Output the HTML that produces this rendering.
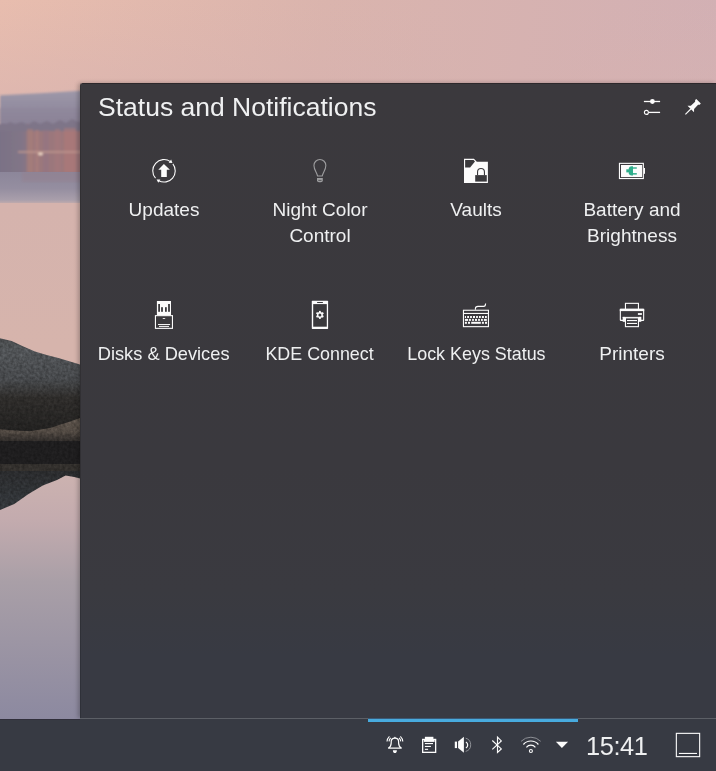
<!DOCTYPE html>
<html><head><meta charset="utf-8">
<style>
html,body{margin:0;padding:0;width:716px;height:771px;overflow:hidden;background:#373a43;}
body{position:relative;font-family:"Liberation Sans",sans-serif;}
#wall{position:absolute;left:0;top:0;width:716px;height:719px;}
#panel{position:absolute;left:80px;top:83px;width:636px;height:635px;background:linear-gradient(180deg,#3b393d 0%,#3a393e 60%,#3a3a40 80%,#383a43 90%,#383a43 100%);border-top-left-radius:3px;box-shadow:-2px 0 4px rgba(0,0,0,0.25);}
#panel:before{content:"";position:absolute;left:0;top:0;bottom:0;width:1px;background:rgba(0,0,0,0.15);}
#panel:after{content:"";position:absolute;left:2px;top:0;right:0;height:1px;background:rgba(20,10,12,0.35);}
.t{position:absolute;color:#eff0f1;white-space:nowrap;line-height:1;}
#title{left:98px;top:94px;font-size:26.5px;}
.lbl{position:absolute;color:#eff0f1;font-size:19px;white-space:nowrap;text-align:center;width:156px;line-height:26px;}
.sq{display:inline-block;transform-origin:50% 50%;}
#taskbar{position:absolute;left:0;top:719px;width:716px;height:52px;background:#373a43;}
#tline{position:absolute;left:80px;top:718px;width:636px;height:1px;background:#5c5f66;}
#tline2{position:absolute;left:0;top:719px;width:80px;height:1px;background:#302f3b;}
#bluebar{position:absolute;left:368px;top:718px;width:210px;height:4px;background:linear-gradient(180deg,#3a5a78 0,#3a5a78 1px,#4aaadc 1px,#46abe0 4px);}
svg.i{position:absolute;overflow:visible;}
</style></head><body>
<svg id="wall" width="716" height="719" viewBox="0 0 716 719" style="position:absolute">
  <defs>
    <linearGradient id="sky" gradientUnits="userSpaceOnUse" x1="0" y1="0" x2="716" y2="90">
      <stop offset="0" stop-color="#e8bdae"/>
      <stop offset="0.45" stop-color="#dab4ad"/>
      <stop offset="1" stop-color="#d2b0b4"/>
    </linearGradient>
    <linearGradient id="skyv" gradientUnits="userSpaceOnUse" x1="0" y1="0" x2="0" y2="95">
      <stop offset="0" stop-color="#d6b2b0" stop-opacity="0"/>
      <stop offset="1" stop-color="#d6b2b0" stop-opacity="0.5"/>
    </linearGradient>
    <linearGradient id="hill" gradientUnits="userSpaceOnUse" x1="0" y1="90" x2="0" y2="128">
      <stop offset="0" stop-color="#9e98a9"/>
      <stop offset="0.35" stop-color="#958fa2"/>
      <stop offset="1" stop-color="#877f93"/>
    </linearGradient>
    <linearGradient id="refl" gradientUnits="userSpaceOnUse" x1="0" y1="172" x2="0" y2="205">
      <stop offset="0" stop-color="#8c869a"/>
      <stop offset="0.5" stop-color="#958ea0"/>
      <stop offset="0.85" stop-color="#a99fab"/>
      <stop offset="1" stop-color="#cfb1ad"/>
    </linearGradient>
    <linearGradient id="water1" gradientUnits="userSpaceOnUse" x1="0" y1="203" x2="0" y2="345">
      <stop offset="0" stop-color="#d5b3ad"/>
      <stop offset="1" stop-color="#d6b4ac"/>
    </linearGradient>
    <linearGradient id="water2" gradientUnits="userSpaceOnUse" x1="0" y1="470" x2="0" y2="719">
      <stop offset="0" stop-color="#cdb3b0"/>
      <stop offset="0.2" stop-color="#c3abae"/>
      <stop offset="0.45" stop-color="#a99fa7"/>
      <stop offset="1" stop-color="#8c89a0"/>
    </linearGradient>
    <linearGradient id="rockTop" gradientUnits="userSpaceOnUse" x1="0" y1="338" x2="0" y2="430">
      <stop offset="0" stop-color="#4a4c4e"/>
      <stop offset="0.15" stop-color="#505356"/>
      <stop offset="0.45" stop-color="#46484b"/>
      <stop offset="0.65" stop-color="#2e2c2a"/>
      <stop offset="1" stop-color="#222120"/>
    </linearGradient>
    <linearGradient id="rockRefl" gradientUnits="userSpaceOnUse" x1="0" y1="471" x2="0" y2="510">
      <stop offset="0" stop-color="#2a2b2d"/>
      <stop offset="1" stop-color="#33373b"/>
    </linearGradient>
    <linearGradient id="ledge" gradientUnits="userSpaceOnUse" x1="0" y1="418" x2="0" y2="442">
      <stop offset="0" stop-color="#5c534b"/>
      <stop offset="0.55" stop-color="#524a43"/>
      <stop offset="1" stop-color="#2c2927"/>
    </linearGradient>
    <linearGradient id="forest" gradientUnits="userSpaceOnUse" x1="0" y1="0" x2="80" y2="0">
      <stop offset="0" stop-color="#7a7286"/>
      <stop offset="0.28" stop-color="#827587"/>
      <stop offset="0.42" stop-color="#9a787c"/>
      <stop offset="1" stop-color="#9e777a"/>
    </linearGradient>
    <filter id="blur1" x="-10%" y="-10%" width="120%" height="120%"><feGaussianBlur stdDeviation="1.3"/></filter>
    <filter id="blur05" x="-10%" y="-10%" width="120%" height="120%"><feGaussianBlur stdDeviation="1"/></filter>
  <filter id="noise" x="0" y="0" width="100%" height="100%" color-interpolation-filters="sRGB">
      <feTurbulence type="fractalNoise" baseFrequency="0.35" numOctaves="2" seed="3"/>
      <feColorMatrix type="matrix" values="1.4 0 0 0 -0.2  1.4 0 0 0 -0.2  1.4 0 0 0 -0.2  0 0 0 0 1"/>
    </filter>
    <clipPath id="rockclip"><path d="M0 338.2 L11.7 341.1 L23.4 346.4 L35 351.6 L46.7 355.1 L58.4 358 L70.1 361.5 L80 364.5 L80 478.5 L74.2 477 L65.6 475.6 L57 480 L42.8 485.6 L28.5 494 L14.3 504 L0 509.9 Z"/></clipPath>
  </defs>
  <rect x="0" y="0" width="716" height="719" fill="url(#sky)"/>
  <rect x="0" y="0" width="716" height="95" fill="url(#skyv)"/>
  <g filter="url(#blur05)"><path d="M0 95.2 L20 94.3 L40 93.3 L60 92 L80 90.8 L716 90.8 L716 130 L0 130 Z" fill="url(#hill)"/>
  <rect x="-5" y="108" width="90" height="15" fill="#8d8698" opacity="0.45"/></g>
  <g filter="url(#blur1)">
  <rect x="-5" y="124" width="90" height="51" fill="url(#forest)"/>
  <path d="M-5 131 L-5 124 L5 125 L10 122 L15 124 L22 122 L28 125 L34 121 L40 124 L47 121 L53 124 L60 120 L66 123 L72 119 L78 122 L85 121 L85 131 Z" fill="#7e7588"/>
  <rect x="27" y="129" width="6" height="45" fill="#b08076" opacity="0.55"/>
  <rect x="35" y="130" width="4" height="44" fill="#a97c7c" opacity="0.7"/>
  <rect x="43" y="130" width="6" height="44" fill="#927483" opacity="0.6"/>
  <rect x="55" y="129" width="5" height="45" fill="#a67a7c" opacity="0.6"/>
  <rect x="64" y="128" width="12" height="46" fill="#b07a78" opacity="0.55"/>
  <rect x="18" y="151" width="66" height="2" fill="#c29a90" opacity="0.7"/>
  <ellipse cx="40.5" cy="154" rx="2.5" ry="1.4" fill="#ead2c2"/>
  </g>
  <rect x="0" y="172" width="80" height="33" fill="url(#refl)"/>
  <rect x="22" y="172" width="62" height="10" fill="#977d89" opacity="0.35" filter="url(#blur1)"/>
  <rect x="0" y="203" width="80" height="170" fill="url(#water1)"/>
  <rect x="0" y="440" width="80" height="279" fill="url(#water2)"/>
  <path d="M0 338.2 L11.7 341.1 L23.4 346.4 L35 351.6 L46.7 355.1 L58.4 358 L70.1 361.5 L80 364.5 L80 442 L0 442 Z" fill="url(#rockTop)"/>
  <path d="M0 429.3 L15 430.5 L30 431.2 L50 428 L70 421.5 L80 418 L80 442 L0 442 Z" fill="url(#ledge)"/>
  <rect x="0" y="441" width="80" height="23" fill="#1e1d1e"/>
  <rect x="0" y="464" width="80" height="7" fill="#322f2c"/>
  <path d="M0 471 L80 471 L80 478.5 L74.2 477 L65.6 475.6 L57 480 L42.8 485.6 L28.5 494 L14.3 504 L0 509.9 Z" fill="url(#rockRefl)"/>
  <rect x="0" y="336" width="80" height="176" filter="url(#noise)" clip-path="url(#rockclip)" opacity="0.22" style="mix-blend-mode:overlay"/>
</svg>

<div id="panel"></div>
<div class="t" id="title">Status and Notifications</div>

<!-- header icons -->
<svg class="i" style="left:640px;top:95px" width="24" height="24" viewBox="0 0 24 24">
  <g stroke="#fcfcfc" stroke-width="1.3" fill="none">
    <line x1="3.9" y1="6.5" x2="20.1" y2="6.5"/>
    <line x1="8.9" y1="17.4" x2="20.1" y2="17.4"/>
    <circle cx="6.4" cy="17.4" r="2.0" stroke-width="1.1"/>
  </g>
  <circle cx="12.4" cy="6.5" r="2.4" fill="#fcfcfc"/>
</svg>
<svg class="i" style="left:681px;top:95px" width="24" height="24" viewBox="0 0 24 24">
  <g transform="translate(4.4 19.4) rotate(45)">
    <line x1="0" y1="0" x2="0" y2="-8" stroke="#fcfcfc" stroke-width="1.1"/>
    <path d="M-4.6 -7.6 L4.6 -7.6 L2.3 -10 L2.1 -15.8 L3.2 -17 L3.2 -18.6 L-3.2 -18.6 L-3.2 -17 L-2.1 -15.8 L-2.3 -10 Z" fill="#fcfcfc"/>
  </g>
</svg>

<!-- row 1 icons -->
<svg class="i" style="left:148px;top:155px" width="32" height="32" viewBox="0 0 32 32">
  <g fill="none" stroke="#fcfcfc" stroke-width="1.1">
    <path d="M24.87 8.87 A11.25 11.25 0 0 1 10.72 25.73"/>
    <path d="M7.51 23.18 A11.25 11.25 0 0 1 22.45 6.58"/>
  </g>
  <g fill="#fcfcfc">
    <path d="M8.56 24.45 L10.27 27.82 L12.33 24.39Z"/>
    <path d="M24.44 8.12 L23.15 4.57 L20.69 7.72Z"/>
    <path d="M15.9 8.9 L21.9 14.75 L18.8 14.75 L18.8 21.9 L13.2 21.9 L13.2 14.75 L10.3 14.75 Z"/>
  </g>
</svg>
<svg class="i" style="left:304px;top:155px" width="32" height="32" viewBox="0 0 32 32">
  <path d="M13.6 21 C12.8 17.6 9.95 14.6 9.95 10.45 A5.95 5.95 0 0 1 21.85 10.45 C21.85 14.6 19 17.6 18.2 21 Z" fill="none" stroke="#9d9d9f" stroke-width="1.1"/>
  <path d="M13 23 L18.8 23 L18.8 25.5 Q18.8 27.3 16.8 27.3 L15 27.3 Q13 27.3 13 25.5 Z" fill="#9d9d9f"/>
  <line x1="14.3" y1="25.4" x2="17.5" y2="25.4" stroke="#3a393c" stroke-width="0.7"/>
</svg>
<svg class="i" style="left:460px;top:155px" width="32" height="32" viewBox="0 0 32 32">
  <path d="M4 3.8 L13.9 3.8 L16.8 6.7 L27.9 6.7 L27.9 27.9 L4 27.9 Z" fill="#fcfcfc"/>
  <path d="M5.1 5.1 L13.6 5.1 L15 6.5 L10.1 12.5 L5.1 12.5 Z" fill="#3a393c"/>
  <rect x="15.2" y="20.1" width="11.6" height="6.5" fill="#3a393c"/>
  <path d="M17.55 20.3 L17.55 16.9 A3.45 3.45 0 0 1 24.45 16.9 L24.45 20.3" fill="none" stroke="#3a393c" stroke-width="1.1"/>
</svg>
<svg class="i" style="left:616px;top:155px" width="32" height="32" viewBox="0 0 32 32">
  <rect x="3.45" y="8.35" width="23.9" height="15.2" fill="none" stroke="#fcfcfc" stroke-width="1.1"/>
  <rect x="27.9" y="13" width="1.1" height="5.8" fill="#fcfcfc"/>
  <rect x="5" y="10" width="21.1" height="12.1" fill="#fcfcfc"/>
  <g fill="#2fae8c">
    <rect x="10.3" y="14.3" width="3" height="3.1"/>
    <path d="M12.8 13 Q13.5 11.2 15.5 11.2 L17 11.2 L17 20.6 L15.5 20.6 Q13.5 20.6 12.8 18.8 Z"/>
    <rect x="16.5" y="12.3" width="4.3" height="1.4"/>
    <rect x="16.5" y="18.1" width="4.3" height="1.5"/>
  </g>
</svg>

<!-- row 2 icons -->
<svg class="i" style="left:148px;top:299px" width="32" height="32" viewBox="0 0 32 32">
  <rect x="8.9" y="2" width="14.1" height="14.3" fill="#fcfcfc"/>
  <g fill="#3a393c">
    <rect x="10.2" y="5" width="1.8" height="7.8"/>
    <rect x="13.1" y="8.2" width="1.8" height="4.6"/>
    <rect x="17" y="8.2" width="1.8" height="4.6"/>
    <rect x="20.1" y="5" width="1.8" height="7.8"/>
  </g>
  <rect x="7.45" y="16.65" width="17" height="12.7" fill="#3a393c" stroke="#fcfcfc" stroke-width="1.1"/>
  <path d="M14.3 19.9 Q15.9 17.9 17.6 19.9 Z" fill="#fcfcfc"/>
  <rect x="10" y="25" width="12.1" height="0.95" fill="#fcfcfc"/>
  <rect x="11" y="26.9" width="10" height="1" fill="#fcfcfc"/>
</svg>
<svg class="i" style="left:304px;top:299px" width="32" height="32" viewBox="0 0 32 32">
  <rect x="7.8" y="1.8" width="16.3" height="28.1" rx="0.6" fill="#fcfcfc"/>
  <rect x="9.2" y="5.1" width="13.6" height="22.6" fill="#3a393c"/>
  <rect x="13" y="2.9" width="6" height="1.1" rx="0.5" fill="#3a393c"/>
  <g transform="translate(15.9 15.9)" fill="#fcfcfc">
    <circle r="2.9"/>
    <g>
      <rect x="-0.9" y="-4" width="1.8" height="8"/>
      <rect x="-0.9" y="-4" width="1.8" height="8" transform="rotate(60)"/>
      <rect x="-0.9" y="-4" width="1.8" height="8" transform="rotate(120)"/>
    </g>
    <circle r="1.5" fill="#3a393c"/>
  </g>
</svg>
<svg class="i" style="left:460px;top:299px" width="32" height="32" viewBox="0 0 32 32">
  <rect x="3.45" y="11.25" width="25" height="16.4" fill="none" stroke="#fcfcfc" stroke-width="1.1"/>
  <line x1="3.5" y1="14.45" x2="28.4" y2="14.45" stroke="#fcfcfc" stroke-width="1.1"/>
  <path d="M15.4 10.8 L15.4 9.6 Q15.4 7.4 18 7.4 L23.6 7.4 Q25.6 7.4 25.6 4.4" fill="none" stroke="#fcfcfc" stroke-width="1.1"/>
  <g fill="#fcfcfc">
    <rect x="4.9" y="17" width="1.1" height="2"/>
    <rect x="7.2" y="17" width="1.8" height="2"/>
    <rect x="10.1" y="17" width="1.8" height="2"/>
    <rect x="13" y="17" width="2" height="2"/>
    <rect x="16.1" y="17" width="1.8" height="2"/>
    <rect x="19" y="17" width="1.8" height="2"/>
    <rect x="21.9" y="17" width="2" height="2"/>
    <rect x="25" y="17" width="1.8" height="2"/>
    <rect x="4.9" y="19.9" width="3.1" height="2"/>
    <rect x="8.9" y="19.9" width="2" height="2"/>
    <rect x="12.1" y="19.9" width="1.8" height="2"/>
    <rect x="15" y="19.9" width="2" height="2"/>
    <rect x="18.1" y="19.9" width="1.8" height="2"/>
    <rect x="21" y="19.9" width="1.8" height="2"/>
    <rect x="23.9" y="19.9" width="2.9" height="2"/>
    <rect x="4.9" y="22.8" width="2" height="2"/>
    <rect x="8" y="22.8" width="2" height="2"/>
    <rect x="11.2" y="22.8" width="9.6" height="2"/>
    <rect x="21.9" y="22.8" width="2" height="2"/>
    <rect x="25" y="22.8" width="2" height="2"/>
  </g>
</svg>
<svg class="i" style="left:616px;top:299px" width="32" height="32" viewBox="0 0 32 32">
  <g fill="none" stroke="#fcfcfc" stroke-width="1.1">
    <rect x="9.45" y="4.35" width="13" height="6.5"/>
    <rect x="4.35" y="10.35" width="23.3" height="11" rx="0.4"/>
  </g>
  <g fill="#fcfcfc">
    <rect x="3.8" y="9.8" width="24.4" height="2.3"/>
    <rect x="6.7" y="17.9" width="18.3" height="1"/>
    <rect x="6.7" y="17.9" width="2.4" height="4.9"/>
    <rect x="22.9" y="17.9" width="2.4" height="4.9"/>
    <rect x="21.9" y="14.1" width="4" height="1.8"/>
  </g>
  <rect x="9.45" y="18.85" width="13" height="8.8" fill="#3a393d" stroke="#fcfcfc" stroke-width="1.1"/>
  <rect x="11" y="21" width="10" height="1.1" fill="#fcfcfc"/>
  <rect x="11" y="23.9" width="10" height="1.1" fill="#fcfcfc"/>
</svg>

<div class="lbl" style="left:86px;top:197px;">Updates</div>
<div class="lbl" style="left:242px;top:197px;">Night Color<br>Control</div>
<div class="lbl" style="left:398px;top:197px;">Vaults</div>
<div class="lbl" style="left:554px;top:197px;">Battery and<br>Brightness</div>
<div class="lbl" style="left:86px;top:341px;"><span class="sq" style="transform:scaleX(0.96)">Disks &amp; Devices</span></div>
<div class="lbl" style="left:242px;top:341px;"><span class="sq" style="transform:scaleX(0.94)">KDE Connect</span></div>
<div class="lbl" style="left:398px;top:341px;"><span class="sq" style="transform:scaleX(0.942)">Lock Keys Status</span></div>
<div class="lbl" style="left:554px;top:341px;">Printers</div>

<div id="taskbar"></div>
<div id="tline"></div>
<div id="tline2"></div>
<div id="bluebar"></div>

<!-- tray icons -->
<svg class="i" style="left:384px;top:733px" width="22" height="22" viewBox="0 0 22 22">
  <g fill="none" stroke="#fcfcfc" stroke-width="1.2">
    <path d="M4.2 15.2 L17.6 15.2 C15.4 14 14.6 12.5 14.6 10 L14.6 8.8 C14.6 6.6 13 5.2 10.9 5.2 C8.8 5.2 7.2 6.6 7.2 8.8 L7.2 10 C7.2 12.5 6.4 14 4.2 15.2 Z"/>
    <path d="M3.01 8.59 A7.9 7.9 0 0 1 5.41 3.32" stroke-width="1.1"/>
    <path d="M5.03 8.38 A5.9 5.9 0 0 1 6.66 4.90" stroke-width="1.1"/>
    <path d="M18.79 8.59 A7.9 7.9 0 0 0 16.39 3.32" stroke-width="1.1"/>
    <path d="M16.77 8.38 A5.9 5.9 0 0 0 15.14 4.90" stroke-width="1.1"/>
  </g>
  <circle cx="10.9" cy="4.6" r="0.8" fill="#fcfcfc"/>
  <path d="M8.9 17.2 L12.9 17.2 Q12.9 20 10.9 20 Q8.9 20 8.9 17.2 Z" fill="#fcfcfc"/>
</svg>
<svg class="i" style="left:418px;top:733px" width="22" height="22" viewBox="0 0 22 22">
  <rect x="4.65" y="6.45" width="13" height="12.9" fill="none" stroke="#fcfcfc" stroke-width="1.3"/>
  <rect x="6.9" y="3.8" width="8.5" height="2.6" fill="#fcfcfc"/>
  <rect x="5.8" y="6" width="10.8" height="2.9" fill="#fcfcfc"/>
  <rect x="6.9" y="10" width="8.1" height="1.1" fill="#fcfcfc"/>
  <rect x="6.9" y="12.9" width="6" height="1.1" fill="#fcfcfc"/>
  <rect x="6.9" y="15.8" width="3.2" height="1.1" fill="#fcfcfc"/>
</svg>
<svg class="i" style="left:451px;top:733px" width="22" height="22" viewBox="0 0 22 22">
  <rect x="3.8" y="8.6" width="2.2" height="6.5" fill="#fcfcfc"/>
  <path d="M7.1 8.6 L12.9 3.8 L12.9 19.7 L7.1 15.1 Z" fill="#fcfcfc"/>
  <path d="M14.9 8.9 A3.57 3.57 0 0 1 14.9 15.1" fill="none" stroke="#fcfcfc" stroke-width="1.2"/>
  <path d="M14.7 5.2 A6.86 6.86 0 0 1 14.7 18.4" fill="none" stroke="#8d8f95" stroke-width="1"/>
</svg>
<svg class="i" style="left:486px;top:733px" width="22" height="22" viewBox="0 0 22 22">
  <path d="M6.3 7.5 L15.3 15.9 L11.5 19.5 L11.5 4.2 L15.3 7.9 L6.3 16.3" fill="none" stroke="#fcfcfc" stroke-width="1.15" stroke-linejoin="miter"/>
</svg>
<svg class="i" style="left:520px;top:733px" width="22" height="22" viewBox="0 0 22 22">
  <g fill="none" stroke-width="1.2">
    <path d="M6.4 14.3 A5.8 5.8 0 0 1 15.4 14.3" stroke="#fcfcfc"/>
    <path d="M3.4 11.5 A9.8 9.8 0 0 1 18.4 11.5" stroke="#fcfcfc"/>
    <path d="M1.1 8.3 A13.8 13.8 0 0 1 20.7 8.3" stroke="#8d8f95" stroke-width="1"/>
    <circle cx="10.9" cy="18" r="1.5" stroke="#fcfcfc" stroke-width="1.1"/>
  </g>
</svg>
<svg class="i" style="left:551px;top:733px" width="22" height="22" viewBox="0 0 22 22">
  <path d="M4.9 8.75 L17.05 8.75 L10.9 15.05 Z" fill="#fcfcfc"/>
</svg>

<div class="t" style="left:586px;top:734px;font-size:25.4px;letter-spacing:-0.4px;">15:41</div>

<svg class="i" style="left:672px;top:729px" width="32" height="32" viewBox="0 0 32 32">
  <rect x="4.35" y="4.35" width="23.3" height="23.3" fill="none" stroke="#fcfcfc" stroke-width="1.1"/>
  <rect x="6.9" y="23.9" width="18.1" height="1.1" fill="#fcfcfc"/>
</svg>
</body></html>
